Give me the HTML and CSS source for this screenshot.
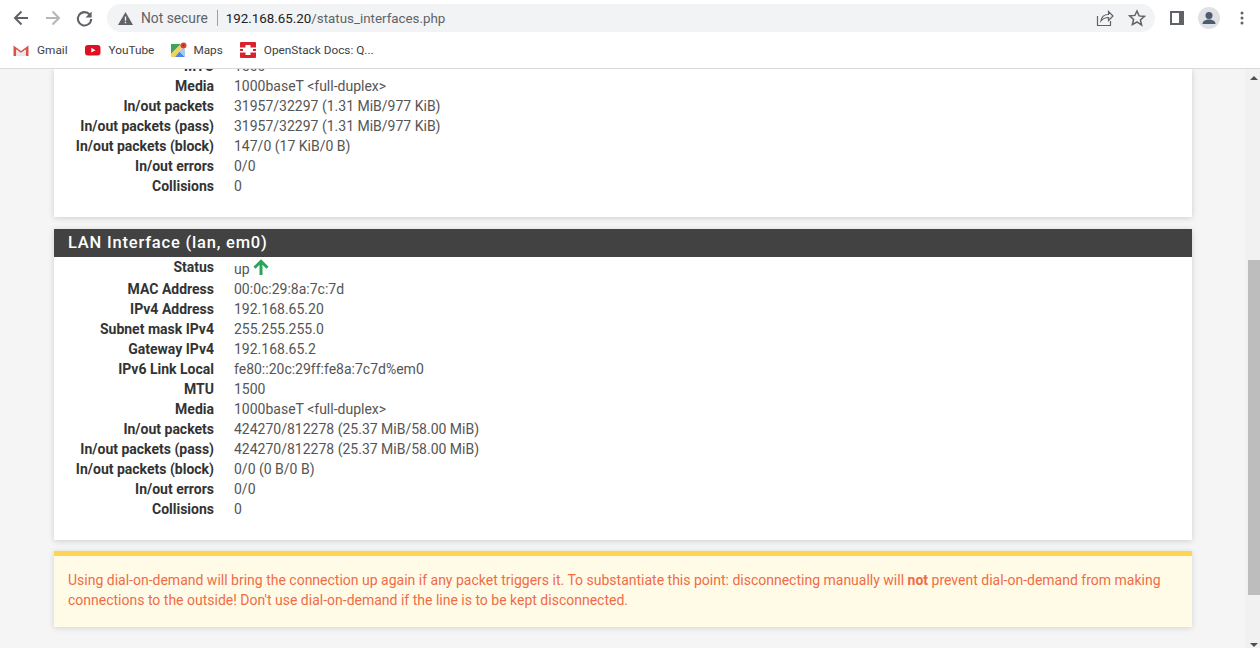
FILE: index.html
```html
<!DOCTYPE html>
<html lang="en">
<head>
<meta charset="utf-8">
<title>Status: Interfaces</title>
<link rel="stylesheet" href="styles.css">
</head>
<body>
<header class="chrome">
  <div class="toolbar">
    <svg class="ico back" viewBox="0 0 20 20"><path d="M17 10H4.500M10.500 3.500 4 10l6.500 6.500" fill="none" stroke="#5f6368" stroke-width="2"/></svg>
    <svg class="ico fwd" viewBox="0 0 20 20"><path d="M3 10h12.500M9.500 3.500 16 10l-6.500 6.500" fill="none" stroke="#b4b6b9" stroke-width="2"/></svg>
    <svg class="ico reload" viewBox="0 0 20 20"><path d="M15.500 6A7 7 0 1 0 17 10.500" fill="none" stroke="#5f6368" stroke-width="2.200"/><path d="M17.500 2.500v6.500H11z" fill="#5f6368"/></svg>
    <div class="omnibox">
      <svg class="warn" viewBox="0 0 15 13"><path d="M7.500 0 15 13H0z" fill="#5f6368"/><path d="M6.800 4.500h1.400v4.200H6.800zM6.800 9.800h1.400v1.400H6.800z" fill="#f1f3f4"/></svg>
      <span class="notsecure">Not secure</span>
      <span class="sep"></span>
      <span class="url"><span class="host">192.168.65.20</span>/status_interfaces.php</span>
      <svg class="share" viewBox="0 0 18 18"><path d="M1.500 7v9.500h13V12M5 12c.5-4 3.500-6.500 7.500-6.500V2.500L17 7l-4.500 4.500V8.500C9.500 8.500 7 9.500 5 12z" fill="none" stroke="#5f6368" stroke-width="1.200"/></svg>
      <svg class="star" viewBox="0 0 18 18"><path d="M9 2l2.100 4.900 5.300.5-4 3.500 1.200 5.200L9 13l-4.600 2.600 1.200-5.200-4-3.500 5.300-.5z" fill="none" stroke="#5f6368" stroke-width="1.500"/></svg>
    </div>
    <svg class="panel" viewBox="0 0 14 14"><path d="M0 0h14v14H0zM2 2v10h7V2z" fill="#5f6368" fill-rule="evenodd"/></svg>
    <svg class="avatar" viewBox="0 0 22 22"><circle cx="11" cy="11" r="11" fill="#dfe1e5"/><circle cx="11" cy="8.500" r="3.500" fill="#4e5b6e"/><path d="M4.500 17c0-3 3-4.500 6.500-4.500s6.500 1.500 6.500 4.500z" fill="#4e5b6e"/></svg>
    <svg class="dots" viewBox="0 0 4 14"><circle cx="2" cy="2" r="1.500" fill="#5f6368"/><circle cx="2" cy="7" r="1.500" fill="#5f6368"/><circle cx="2" cy="12" r="1.500" fill="#5f6368"/></svg>
  </div>
  <nav class="bookmarks">
    <a class="bm"><svg class="bm-ico" viewBox="0 0 16 12"><path d="M.5 12V1.500L8 7l7.500-5.500V12h-2.800V5.500L8 9 3.300 5.500V12z" fill="#d9534a"/><path d="M3.300 5.500 8 9l4.700-3.500V12H3.300z" fill="#e8e8e8"/></svg>Gmail</a>
    <a class="bm"><svg class="bm-ico" viewBox="0 0 16 12"><rect y="1" width="15.500" height="10.500" rx="3" fill="#e01020"/><path d="M6.300 3.800 10.500 6.200 6.300 8.600z" fill="#fff"/></svg>YouTube</a>
    <a class="bm bm-tight"><svg class="bm-ico" viewBox="0 0 16 16"><path d="M0 2h10L0 12z" fill="#3fa45b"/><path d="M0 12 10 2l2 3-8 10H0z" fill="#f4d35a"/><path d="M4 15l4.500-5.500L14 15z" fill="#4a86e8"/><path d="M8.500 9.500 12 5.500l2 2V15z" fill="#a8c8f0"/><circle cx="12.500" cy="3.500" r="3" fill="#d9443a"/><circle cx="12.500" cy="3.500" r="1" fill="#8e2a24"/></svg>Maps</a>
    <a class="bm"><svg class="bm-ico" viewBox="0 0 16 16"><rect width="16" height="16" rx="1" fill="#d8222e"/><rect x="3" y="3" width="10" height="10" fill="#fff"/><path d="M3 3h2.500v2.500H3zM10.500 3H13v2.500h-2.500zM3 10.500h2.500V13H3zM10.500 10.500H13V13h-2.500z" fill="#d8222e"/><path d="M0 5.500h3V7H0zM13 5.500h3V7h-3zM0 9h3v1.500H0zM13 9h3v1.500h-3z" fill="#fff"/></svg>OpenStack Docs: Q...</a>
  </nav>
</header>
<div class="viewport">
  <main class="content">
    <section class="panel-card first">
      <dl class="rows cut">
        <dt>MTU</dt><dd>1500</dd>
        <dt>Media</dt><dd>1000baseT &lt;full-duplex&gt;</dd>
        <dt>In/out packets</dt><dd>31957/32297 (1.31 MiB/977 KiB)</dd>
        <dt>In/out packets (pass)</dt><dd>31957/32297 (1.31 MiB/977 KiB)</dd>
        <dt>In/out packets (block)</dt><dd>147/0 (17 KiB/0 B)</dd>
        <dt>In/out errors</dt><dd>0/0</dd>
        <dt>Collisions</dt><dd>0</dd>
      </dl>
    </section>
    <section class="panel-card">
      <h2 class="panel-title">LAN Interface (lan, em0)</h2>
      <dl class="rows lan">
        <dt>Status</dt>
        <dd class="status">up <svg class="arrow" viewBox="0 0 16 16"><path d="M8 16V2.500M1.500 8.800 8 2.300l6.500 6.500" fill="none" stroke="#2aa55a" stroke-width="3"/></svg></dd>
        <dt>MAC Address</dt><dd>00:0c:29:8a:7c:7d</dd>
        <dt>IPv4 Address</dt><dd>192.168.65.20</dd>
        <dt>Subnet mask IPv4</dt><dd>255.255.255.0</dd>
        <dt>Gateway IPv4</dt><dd>192.168.65.2</dd>
        <dt>IPv6 Link Local</dt><dd>fe80::20c:29ff:fe8a:7c7d%em0</dd>
        <dt>MTU</dt><dd>1500</dd>
        <dt>Media</dt><dd>1000baseT &lt;full-duplex&gt;</dd>
        <dt>In/out packets</dt><dd>424270/812278 (25.37 MiB/58.00 MiB)</dd>
        <dt>In/out packets (pass)</dt><dd>424270/812278 (25.37 MiB/58.00 MiB)</dd>
        <dt>In/out packets (block)</dt><dd>0/0 (0 B/0 B)</dd>
        <dt>In/out errors</dt><dd>0/0</dd>
        <dt>Collisions</dt><dd>0</dd>
      </dl>
    </section>
    <div class="notice">Using dial-on-demand will bring the connection up again if any packet triggers it. To substantiate this point: disconnecting manually will <b>not</b> prevent dial-on-demand from making connections to the outside! Don't use dial-on-demand if the line is to be kept disconnected.</div>
  </main>
  <div class="scrollbar">
    <span class="sb-arrow up"></span>
    <div class="thumb"></div>
    <span class="sb-arrow down"></span>
  </div>
</div>
</body>
</html>
```

FILE: styles.css
```css
* { box-sizing: border-box; }
html, body { margin: 0; height: 648px; overflow: hidden; }
body { background: #f5f5f5; font-family: Roboto, "Liberation Sans", sans-serif; }

.chrome { height: 69px; background: #fff; border-bottom: 1px solid #d9dadc; display: flex; flex-direction: column; position: relative; z-index: 2; }
.toolbar { height: 36px; display: flex; align-items: center; padding-left: 11px; }
.ico { width: 20px; height: 20px; flex: none; }
.fwd { margin-left: 12px; }
.reload { margin-left: 12px; width: 19px; height: 19px; }
.omnibox { margin-left: 13px; width: 1048px; height: 28px; border-radius: 14px; background: #f1f3f4; display: flex; align-items: center; padding: 0 9px 0 11px; font-size: 13.800px; color: #5f6368; flex: none; }
.warn { width: 15px; height: 13px; flex: none; }
.notsecure { margin-left: 8px; }
.sep { width: 1px; height: 16px; background: #9aa0a6; margin: 0 8px 0 9px; }
.url { flex: 1; font-size: 13.350px; }
.host { color: #202124; }
.share { width: 18px; height: 18px; margin-right: 14px; }
.star { width: 18px; height: 18px; }
.panel { width: 14px; height: 14px; margin-left: 15px; flex: none; }
.avatar { width: 22px; height: 22px; margin-left: 14px; flex: none; }
.dots { width: 4px; height: 14px; margin-left: 20px; flex: none; }

.bookmarks { height: 32px; display: flex; align-items: center; padding: 0 0 5px 13px; gap: 17px; }
.bm { display: flex; align-items: center; font-size: 11.800px; color: #3c4043; }
.bm-ico { width: 16px; height: 16px; margin-right: 8px; flex: none; }
.bm-tight .bm-ico { margin-right: 6px; }

.viewport { display: flex; height: 579px; }
.content { width: 1245px; padding-left: 54px; flex: none; }
.panel-card { width: 1138px; background: #fff; box-shadow: 0 1px 6px rgba(0,0,0,.16); margin-bottom: 11px; }
.panel-card.first { height: 148px; overflow: hidden; margin-bottom: 12px; }
.panel-title { margin: 0; height: 28px; line-height: 28px; padding-left: 14px; background: #424242; color: #fff; font-size: 16.500px; font-weight: 500; letter-spacing: .8px; }
.rows { margin: 0; display: grid; grid-template-columns: 160px 1fr; column-gap: 20px; grid-auto-rows: 20px; padding-bottom: 21px; font-size: 14px; line-height: 20px; }
.rows.cut { margin-top: -13px; padding-bottom: 0; }
.rows.lan { grid-template-rows: 22px; }
dt { font-weight: 700; text-align: right; color: #333; }
dd { margin: 0; color: #555; }
dd.status { padding-top: 2px; }
.arrow { width: 16px; height: 16px; vertical-align: -1px; }
.notice { width: 1138px; height: 76px; background: #fffbe6; border-top: 5px solid #ffd54f; padding: 14px 14px 0; font-size: 14px; line-height: 20px; color: #ef6c47; box-shadow: 0 1px 6px rgba(0,0,0,.14); }

.scrollbar { width: 15px; flex: none; background: #f1f1f1; display: flex; flex-direction: column; padding: 7px 0 0 3px; }
.thumb { height: 335px; width: 12px; margin-top: 180px; background: #bdbdbd; flex: none; }
.sb-arrow { width: 0; height: 0; margin-left: 2px; border-left: 4px solid transparent; border-right: 4px solid transparent; flex: none; }
.sb-arrow.up { border-bottom: 4px solid #505050; }
.sb-arrow.down { border-top: 4px solid #505050; margin-top: 48px; }
```
